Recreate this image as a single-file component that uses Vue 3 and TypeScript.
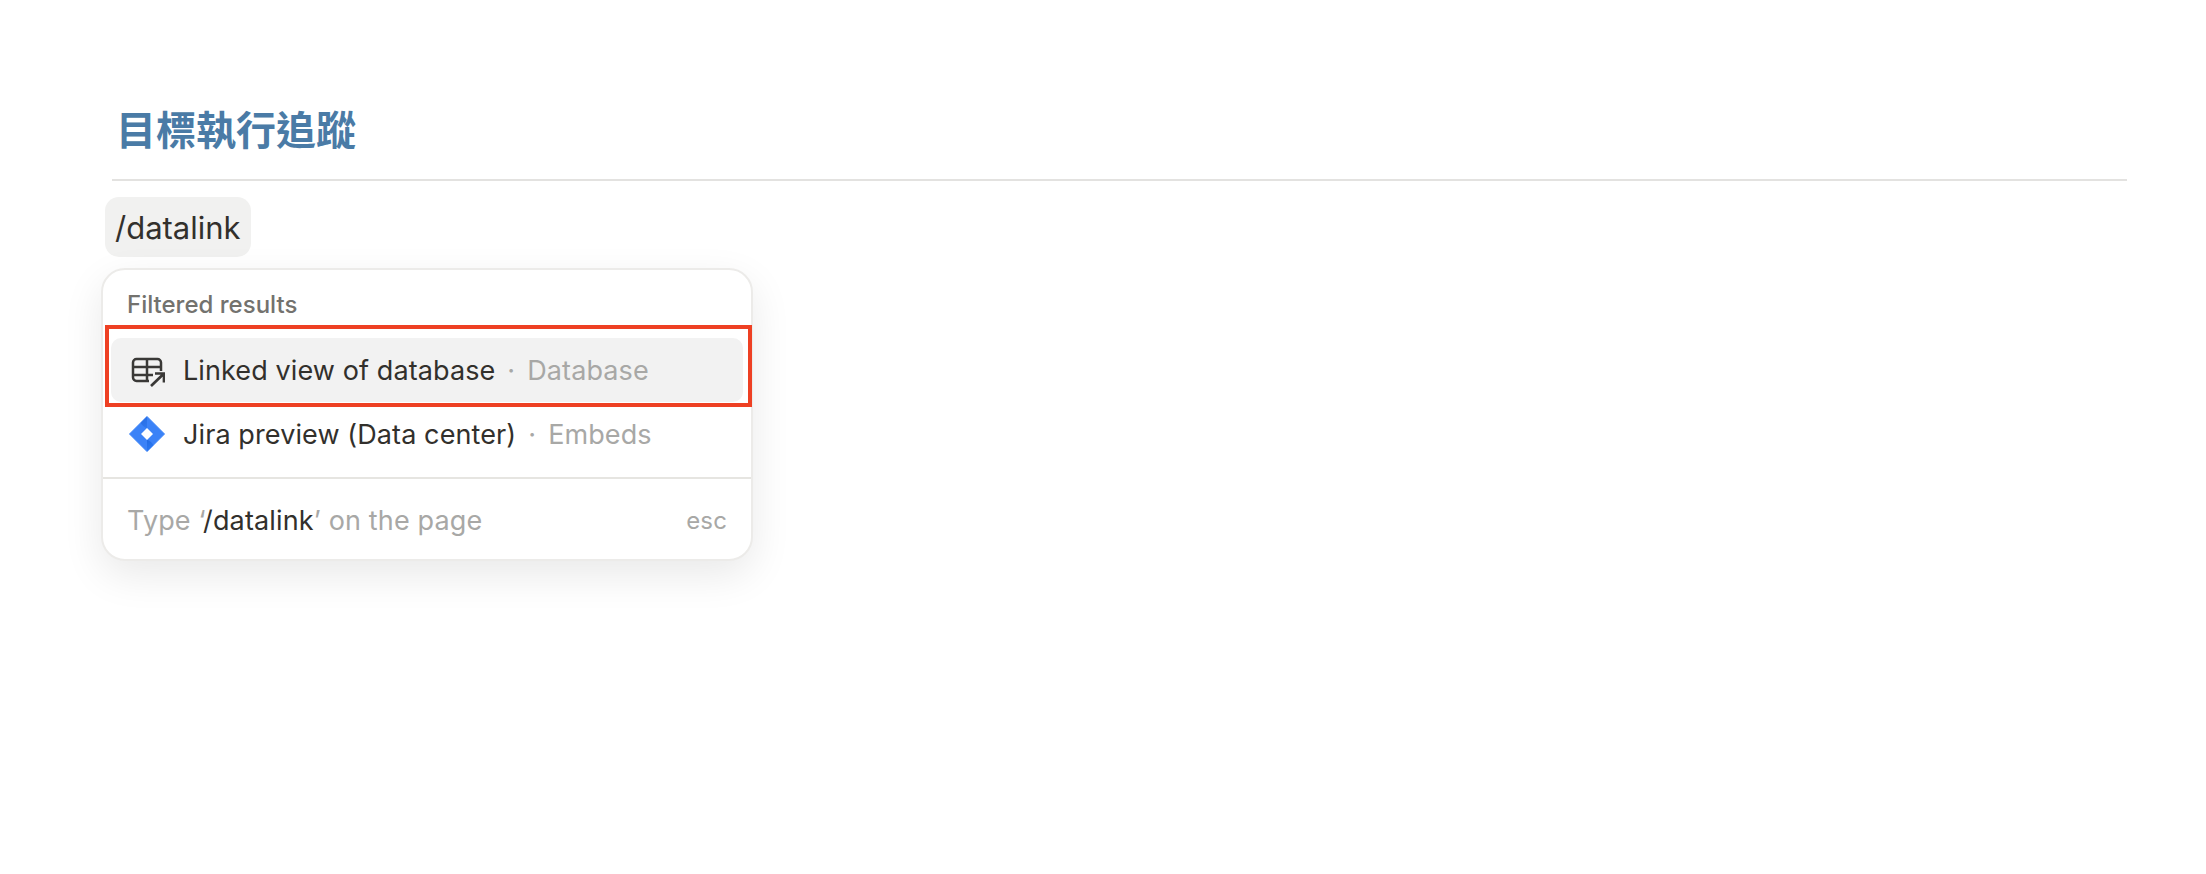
<template>
  <div class="page">
    <h1 class="title">目標執行追蹤</h1>
    <div class="rule"></div>
    <div class="chip">/datalink</div>

    <div class="menu">
      <div class="menu-label">Filtered results</div>
      <div class="menu-list">
        <div class="item active">
          <svg class="icon" viewBox="0 0 36 36" fill="none" stroke="#3a3937" stroke-width="2.500">
            <path d="M20 29H7.500A3.500 3.500 0 0 1 4 25.500V10.500A3.500 3.500 0 0 1 7.500 7h21A3.500 3.500 0 0 1 32 10.500V19" />
            <path d="M4 15H32M4 23H24M18 7V29" />
            <path d="M22 34 35 21.500M26 21.500H35V30.500" stroke-width="2.700" />
          </svg>
          <span class="name">Linked view of database</span>
          <span class="dot">·</span>
          <span class="kind">Database</span>
        </div>
        <div class="item">
          <svg class="icon" viewBox="0 0 36 36">
            <defs>
              <linearGradient id="jira-fold" x1="0.2" y1="0" x2="0.8" y2="1">
                <stop offset="0" stop-color="#1c5fd6" />
                <stop offset="1" stop-color="#2c7cf6" />
              </linearGradient>
            </defs>
            <path d="M18 0.500 35.500 18 18 35.500 0.500 18Z" fill="#3b82f7" stroke="#3b82f7" stroke-linejoin="round" stroke-width="1" />
            <path d="M18 0.500 11.500 7A15 15 0 0 0 18 12.500L23.500 18 24 18 18 12.500Z" fill="url(#jira-fold)" opacity="0.6" />
            <path d="M18 35.500 24.500 29A15 15 0 0 0 18 23.500L12.500 18 12 18 18 23.500Z" fill="url(#jira-fold)" />
            <path d="M18 12 24 18 18 24 12 18Z" fill="#fff" />
          </svg>
          <span class="name">Jira preview (Data center)</span>
          <span class="dot">·</span>
          <span class="kind">Embeds</span>
        </div>
      </div>
      <div class="menu-foot">
        <span class="hint">Type ‘<b>/datalink</b>’ on the page</span>
        <span class="esc">esc</span>
      </div>
      <div class="marker"></div>
    </div>
  </div>
</template>

<script setup lang="ts">
</script>

<style>
body {
  background: #fff;
}
</style>

<style scoped>
.page {
  box-sizing: border-box;
  width: 2206px;
  height: 874px;
  padding: 100px 79px 0 112px;
  overflow: hidden;
  font-family: Inter, "Noto Sans CJK TC", sans-serif;
  color: #32302c;
}

.title {
  margin: 0 0 0 4px;
  height: 56px;
  font-family: "Noto Sans CJK TC", sans-serif;
  font-size: 40px;
  line-height: 56px;
  font-weight: 700;
  color: #4a7ba6;
}

.rule {
  height: 2px;
  margin-top: 23px;
  background: #e3e2e0;
}

.chip {
  width: fit-content;
  margin: 16px 0 0 -7px;
  padding: 0 10px;
  height: 60px;
  line-height: 62px;
  font-size: 31px;
  background: #f1f1f0;
  border-radius: 14px;
}

.menu {
  position: relative;
  box-sizing: border-box;
  width: 652px;
  height: 293px;
  margin: 11px 0 0 -11px;
  background: #fff;
  border: 2px solid #ecebe9;
  border-radius: 24px;
  box-shadow: 0 14px 40px rgba(15, 15, 15, 0.09);
}

.menu-label {
  height: 68px;
  padding: 0 0 0 24px;
  line-height: 70px;
  font-size: 24px;
  font-weight: 500;
  color: #73726e;
}

.menu-list {
  padding: 0 8px;
  border-bottom: 2px solid #e6e5e1;
  height: 139px;
}

.item {
  display: flex;
  align-items: center;
  height: 64px;
  padding: 0 18px;
  font-size: 27px;
  letter-spacing: 0.1px;
  border-radius: 10px;
}

.item.active {
  background: #f2f2f2;
}

.icon {
  flex: none;
  width: 36px;
  height: 36px;
  margin-right: 18px;
}

.dot {
  margin: 0 12px;
  color: #a8a8a6;
}

.kind {
  color: #a8a8a6;
}

.menu-foot {
  display: flex;
  justify-content: space-between;
  align-items: center;
  height: 82px;
  padding: 0 24px;
  font-size: 27px;
  letter-spacing: 0.14px;
  color: #a8a8a6;
}

.hint b {
  font-weight: 400;
  color: #32302c;
}

.esc {
  font-size: 24px;
}

.marker {
  position: absolute;
  left: 2px;
  top: 55px;
  width: 647px;
  height: 82px;
  box-sizing: border-box;
  border: 4px solid #ee4023;
}
</style>
